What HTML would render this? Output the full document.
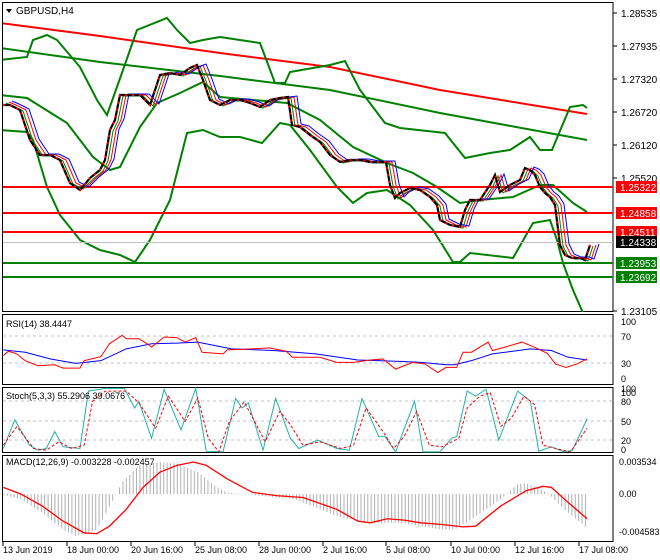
<!DOCTYPE html>
<html><head><meta charset="utf-8"><style>
html,body{margin:0;padding:0;background:#fff;}
svg{display:block;font-family:"Liberation Sans",sans-serif;}
</style></head><body>
<svg width="660" height="560" xmlns="http://www.w3.org/2000/svg">
<defs>
<pattern id="hp" patternUnits="userSpaceOnUse" width="8.08" height="10"><rect x="0" y="0" width="2.4" height="10" fill="#b0b0b0"/></pattern>
<clipPath id="cm"><rect x="3" y="3" width="610" height="309"/></clipPath>
</defs>
<rect width="660" height="560" fill="#fff"/>

<!-- panel borders -->
<rect x="2.5" y="2.5" width="610.5" height="309" fill="none" stroke="#000"/>
<rect x="2.5" y="314.5" width="610.5" height="70" fill="none" stroke="#000"/>
<rect x="2.5" y="387.5" width="610.5" height="65" fill="none" stroke="#000"/>
<rect x="2.5" y="455.5" width="610.5" height="86" fill="none" stroke="#000"/>

<g clip-path="url(#cm)" fill="none">
<polyline stroke="#ff0000" stroke-width="2" points="0,23 100,36 220,53 330,67 440,90 587,114"/>
<polyline stroke="#008000" stroke-width="2" points="0,48 100,62 220,76 330,90 440,113 587,140"/>
<polyline stroke="#008000" stroke-width="2" points="0,60 27,57 33,40 47,35 57,40 80,67 97,100 107,115 123,70 137,30 167,18 177,30 190,43 203,40 220,37 260,43 275,83 285,83 290,72 330,65 345,61 360,90 385,123 400,128 445,133 465,158 490,153 510,150 530,137 540,150 552,150 570,107 583,105 587,108"/>
<polyline stroke="#008000" stroke-width="2" points="0,130 27,132 33,140 47,187 60,215 80,240 100,250 120,255 135,262 150,240 170,200 187,133 203,130 220,137 240,137 262,143 280,123 290,125 310,150 337,187 353,203 367,193 387,190 410,205 433,230 453,262 460,262 470,253 513,258 533,223 550,220 557,240 563,263 573,290 583,313"/>
<polyline stroke="#008000" stroke-width="2" points="0,95 27,98 67,123 93,157 110,170 120,167 140,127 157,103 180,93 203,82 220,97 287,103 320,120 353,147 387,163 413,173 437,187 460,203 480,200 513,197 540,185 553,185 573,203 587,212"/>

<line x1="3" x2="613" y1="187" y2="187" stroke="#ff0000" stroke-width="2"/>
<line x1="3" x2="613" y1="213" y2="213" stroke="#ff0000" stroke-width="2"/>
<line x1="3" x2="613" y1="232" y2="232" stroke="#ff0000" stroke-width="2"/>
<line x1="3" x2="613" y1="242.5" y2="242.5" stroke="#c0c0c0" stroke-width="1"/>
<line x1="3" x2="613" y1="263" y2="263" stroke="#008000" stroke-width="2"/>
<line x1="3" x2="613" y1="277" y2="277" stroke="#008000" stroke-width="2"/>

<g id="pr">
<polyline id="pp" stroke-width="1" points="3,100 10,103 20,108 30,138 40,153 50,153 60,158 70,181 80,186 90,176 100,168 105,158 110,128 115,118 120,93 130,93 140,93 150,103 155,88 160,73 170,71 180,73 190,66 197,63 203,78 210,98 220,103 230,98 240,98 250,101 260,105 270,98 280,96 288,95 292,123 300,125 310,133 320,140 330,153 340,160 350,158 360,158 370,160 380,160 386,160 390,183 395,196 400,191 410,186 420,188 430,195 437,203 440,218 450,223 460,225 465,208 470,198 480,198 490,183 495,173 500,190 510,183 520,178 525,166 530,168 535,173 540,185 545,191 550,195 555,203 560,243 565,253 572,256 580,256 585,258 590,243"/>
</g>
<use href="#pp" stroke="#008000" transform="translate(3,3)"/>
<use href="#pp" stroke="#ff0000" transform="translate(6,2)"/>
<use href="#pp" stroke="#0000ff" transform="translate(9,1)"/>
<polyline stroke="#000" stroke-width="2.2" points="3,105 10,105 20,110 30,140 40,155 50,155 60,160 70,183 80,190 90,178 100,170 105,160 110,130 115,120 120,95 130,95 140,95 150,105 155,90 160,75 170,73 180,75 190,68 197,65 203,80 210,100 220,105 230,100 240,100 250,103 260,107 270,100 280,98 288,97 292,125 300,127 310,135 320,142 330,155 340,162 350,160 360,160 370,162 380,162 386,162 390,185 395,198 400,193 410,188 420,190 430,197 437,205 440,220 450,225 460,227 465,210 470,200 480,200 490,185 495,175 500,192 510,185 520,180 525,168 530,170 535,175 540,187 545,193 550,197 555,205 560,245 565,255 572,258 580,258 585,260 590,245"/>
<polyline stroke="#ff0000" stroke-width="2" stroke-dasharray="2,5" points="3,105 10,105 20,110 30,140 40,155 50,155 60,160 70,183 80,190 90,178 100,170 105,160 110,130 115,120 120,95 130,95 140,95 150,105 155,90 160,75 170,73 180,75 190,68 197,65 203,80 210,100 220,105 230,100 240,100 250,103 260,107 270,100 280,98 288,97 292,125 300,127 310,135 320,142 330,155 340,162 350,160 360,160 370,162 380,162 386,162 390,185 395,198 400,193 410,188 420,190 430,197 437,205 440,220 450,225 460,227 465,210 470,200 480,200 490,185 495,175 500,192 510,185 520,180 525,168 530,170 535,175 540,187 545,193 550,197 555,205 560,245 565,255 572,258 580,258 585,260 590,245"/>
</g>

<!-- right axis main -->
<g stroke="#000">
<line x1="613" x2="617" y1="13" y2="13"/><line x1="613" x2="617" y1="46" y2="46"/><line x1="613" x2="617" y1="79" y2="79"/><line x1="613" x2="617" y1="112" y2="112"/><line x1="613" x2="617" y1="145" y2="145"/><line x1="613" x2="617" y1="178" y2="178"/><line x1="613" x2="617" y1="311" y2="311"/>
</g>
<g font-size="10" fill="#000">
<text x="621" y="17">1.28535</text><text x="621" y="50">1.27935</text><text x="621" y="83">1.27320</text><text x="621" y="116">1.26720</text><text x="621" y="149">1.26120</text><text x="621" y="182">1.25520</text><text x="621" y="315">1.23105</text>
</g>
<rect x="616" y="181" width="41" height="12" fill="#ff0000"/>
<rect x="616" y="207" width="41" height="12" fill="#ff0000"/>
<rect x="616" y="226" width="41" height="12" fill="#ff0000"/>
<rect x="616" y="236" width="41" height="12" fill="#000"/>
<rect x="616" y="257" width="41" height="12" fill="#008000"/>
<rect x="616" y="271" width="41" height="12" fill="#008000"/>
<g font-size="10" fill="#fff">
<text x="620" y="191">1.25322</text><text x="620" y="217">1.24858</text><text x="620" y="236">1.24511</text><text x="620" y="246">1.24338</text><text x="620" y="267">1.23953</text><text x="620" y="281">1.23692</text>
</g>

<polygon points="6,9 12,9 9,13" fill="#000"/>
<text x="16" y="14" font-size="10">GBPUSD,H4</text>

<!-- RSI -->
<line x1="3" x2="612" y1="336" y2="336" stroke="#c0c0c0" stroke-dasharray="3,3"/>
<line x1="3" x2="612" y1="363" y2="363" stroke="#c0c0c0" stroke-dasharray="3,3"/>
<!-- Stoch -->
<line x1="3" x2="612" y1="401" y2="401" stroke="#c0c0c0" stroke-dasharray="3,3"/>
<line x1="3" x2="612" y1="421" y2="421" stroke="#c0c0c0" stroke-dasharray="3,3"/>
<line x1="3" x2="612" y1="440" y2="440" stroke="#c0c0c0" stroke-dasharray="3,3"/>

<g transform="translate(0,310) scale(0.4209,0.3378)" fill="none">
<polyline vector-effect="non-scaling-stroke" stroke="#0000ff" stroke-width="1" points="8,118 60,125 120,145 180,158 240,150 300,115 360,100 420,98 470,95 550,115 650,120 750,130 850,148 950,152 1000,155 1060,162 1080,162 1120,150 1170,130 1260,115 1310,120 1350,140 1395,148"/>
<polyline vector-effect="non-scaling-stroke" stroke="#ff0000" stroke-width="1" points="8,135 20,122 40,130 60,150 90,165 130,162 150,172 190,172 200,150 240,138 260,100 290,75 300,85 330,85 350,100 360,110 390,80 420,82 440,95 465,82 480,125 530,130 540,118 600,115 640,112 680,122 695,140 760,140 800,155 840,155 880,148 910,145 940,175 980,155 1010,160 1040,185 1060,170 1085,170 1100,125 1120,125 1160,95 1170,120 1200,110 1240,95 1270,110 1300,128 1320,160 1345,170 1370,160 1395,145"/>
<polyline vector-effect="non-scaling-stroke" stroke="#20b2aa" stroke-width="1" points="8,410 35,325 70,400 90,415 110,410 130,360 150,405 190,410 210,240 250,232 295,232 320,290 330,270 360,380 390,235 430,355 465,232 490,418 530,420 560,262 575,290 590,275 625,415 655,262 690,380 710,410 755,385 800,410 830,415 860,262 900,375 915,375 940,420 985,270 1005,420 1045,420 1075,378 1085,375 1110,240 1130,255 1155,235 1185,385 1230,240 1260,270 1280,418 1310,405 1340,420 1360,415 1395,322"/>
<polyline vector-effect="non-scaling-stroke" stroke="#ff0000" stroke-width="1" stroke-dasharray="3,2" points="8,400 40,345 80,410 110,415 140,390 170,410 200,400 220,270 250,240 300,240 330,275 370,350 400,255 440,330 470,260 495,380 520,420 545,330 580,272 605,330 630,390 665,300 690,340 720,400 760,390 810,410 840,400 870,290 910,360 935,410 960,375 990,300 1020,400 1050,405 1090,380 1110,290 1140,255 1165,245 1190,345 1215,320 1245,255 1270,280 1290,400 1320,410 1355,420 1395,350"/>
<polygon fill="url(#hp)" stroke="none" points="8,545 8,548 50,560 100,600 150,650 180,670 230,650 270,560 290,510 330,460 380,450 420,455 470,480 510,520 540,540 600,548 700,560 800,610 870,630 950,630 1050,650 1080,650 1120,620 1190,560 1230,515 1250,512 1300,540 1340,590 1395,645 1395,545"/>
<polyline vector-effect="non-scaling-stroke" stroke="#ff0000" stroke-width="1.3" points="8,525 50,545 100,580 150,625 200,660 230,662 260,640 300,590 340,525 380,480 420,460 460,450 490,460 540,500 600,540 660,550 720,555 800,590 850,625 880,630 920,618 960,622 1000,630 1050,635 1100,642 1130,640 1190,580 1250,535 1290,522 1310,525 1350,570 1395,618"/>
</g>

<g font-size="9" fill="#000">
<text x="6" y="327">RSI(14) 38.4447</text>
<text x="621" y="325">100</text><text x="621" y="340">70</text><text x="621" y="367">30</text><text x="621" y="382">0</text>
<text x="6" y="399">Stoch(5,3,3) 55.2906 39.0676</text>
<text x="621" y="392">100</text><text x="621" y="396">100</text><text x="621" y="405">80</text><text x="621" y="425">50</text><text x="621" y="444">20</text><text x="621" y="453">0</text>
<text x="6" y="465">MACD(12,26,9) -0.003228 -0.002457</text>
<text x="619" y="465">0.003534</text><text x="619" y="497">0.00</text><text x="619" y="535">-0.004583</text>
</g>

<g stroke="#000">
<line x1="3" x2="3" y1="542" y2="546"/><line x1="67" x2="67" y1="542" y2="546"/><line x1="131" x2="131" y1="542" y2="546"/><line x1="195" x2="195" y1="542" y2="546"/><line x1="259" x2="259" y1="542" y2="546"/><line x1="323" x2="323" y1="542" y2="546"/><line x1="386" x2="386" y1="542" y2="546"/><line x1="451" x2="451" y1="542" y2="546"/><line x1="515" x2="515" y1="542" y2="546"/><line x1="579" x2="579" y1="542" y2="546"/>
</g>
<g font-size="9" fill="#000">
<text x="3" y="553">13 Jun 2019</text><text x="67" y="553">18 Jun 00:00</text><text x="131" y="553">20 Jun 16:00</text><text x="195" y="553">25 Jun 08:00</text><text x="259" y="553">28 Jun 00:00</text><text x="323" y="553">2 Jul 16:00</text><text x="386" y="553">5 Jul 08:00</text><text x="451" y="553">10 Jul 00:00</text><text x="515" y="553">12 Jul 16:00</text><text x="579" y="553">17 Jul 08:00</text>
</g>
</svg>
</body></html>
